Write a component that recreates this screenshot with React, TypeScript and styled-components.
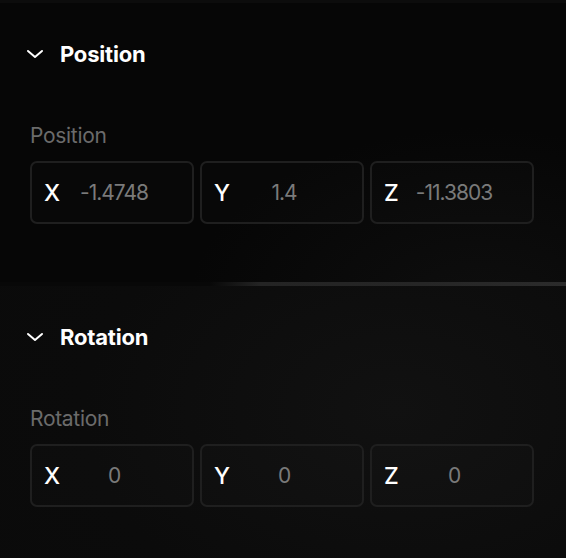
import styled, { createGlobalStyle } from "styled-components";

const GlobalStyle = createGlobalStyle`
  html, body {
    margin: 0;
    padding: 0;
    background: #060606;
  }
  body {
    font-family: Inter, "Noto Sans", sans-serif;
  }
`;

const Panel = styled.div`
  width: 566px;
  height: 558px;
  overflow: hidden;
  display: flex;
  flex-direction: column;
  background: #060606;
  border-top: 3px solid #0c0c0c;
  box-sizing: border-box;
`;

const Section = styled.section<{ $tone: "dark" | "light" }>`
  display: flex;
  flex-direction: column;
  padding: 33px 0 0 30px;
  height: ${(p) => (p.$tone === "dark" ? "279px" : "272px")};
  box-sizing: border-box;
  flex-shrink: 0;
  background: ${(p) =>
    p.$tone === "dark"
      ? "radial-gradient(ellipse 420px 260px at 85% 110%, #0e0e0e 0%, #060606 70%)"
      : "radial-gradient(ellipse 520px 360px at 70% 45%, #111111 0%, #0b0b0b 60%, #0a0a0a 100%)"};
`;

const Divider = styled.div`
  height: 4px;
  flex-shrink: 0;
  background: linear-gradient(
    to right,
    #080808 0%,
    #080808 37%,
    #242424 46%,
    #262626 75%,
    #2b2b2b 100%
  );
`;

const Header = styled.div`
  display: flex;
  align-items: center;
  gap: 16px;
  height: 36px;
  margin-left: -4px;
  color: #ffffff;
`;

const HeaderTitle = styled.h2`
  margin: 0;
  font-size: 22px;
  font-weight: 700;
  letter-spacing: -0.2px;
`;

const Chevron = styled.svg`
  width: 18px;
  height: 10px;
  flex-shrink: 0;
`;

const FieldLabel = styled.div`
  margin-top: 49px;
  height: 30px;
  line-height: 30px;
  font-size: 21px;
  color: #6b6b6b;
  letter-spacing: -0.3px;
`;

const Row = styled.div`
  display: flex;
  gap: 6px;
  margin-top: 10px;
`;

const Field = styled.label`
  display: flex;
  align-items: center;
  width: 164px;
  height: 63px;
  box-sizing: border-box;
  padding-left: 12px;
  border: 2px solid #1f1f1f;
  border-radius: 7px;
  background: rgba(255, 255, 255, 0.012);
`;

const Axis = styled.span`
  width: 20px;
  font-size: 23px;
  font-weight: 500;
  color: #ffffff;
`;

const Value = styled.input`
  width: 100px;
  padding: 0;
  border: 0;
  outline: none;
  background: transparent;
  font-family: inherit;
  font-size: 21px;
  color: #7a7a7a;
  letter-spacing: -1px;
  text-align: center;
`;

interface Vec {
  axis: string;
  value: string;
}

const ChevronIcon = () => (
  <Chevron viewBox="0 0 18 10" fill="none">
    <path d="M2 2l7 6 7-6" stroke="#ffffff" strokeWidth="2" strokeLinecap="round" strokeLinejoin="round" />
  </Chevron>
);

const VectorSection = ({ title, values, tone }: { title: string; values: Vec[]; tone: "dark" | "light" }) => (
  <Section $tone={tone}>
    <Header>
      <ChevronIcon />
      <HeaderTitle>{title}</HeaderTitle>
    </Header>
    <FieldLabel>{title}</FieldLabel>
    <Row>
      {values.map((v) => (
        <Field key={v.axis}>
          <Axis>{v.axis}</Axis>
          <Value defaultValue={v.value} />
        </Field>
      ))}
    </Row>
  </Section>
);

export default function App() {
  return (
    <>
      <GlobalStyle />
      <Panel>
        <VectorSection
          tone="dark"
          title="Position"
          values={[
            { axis: "X", value: "-1.4748" },
            { axis: "Y", value: "1.4" },
            { axis: "Z", value: "-11.3803" },
          ]}
        />
        <Divider />
        <VectorSection
          tone="light"
          title="Rotation"
          values={[
            { axis: "X", value: "0" },
            { axis: "Y", value: "0" },
            { axis: "Z", value: "0" },
          ]}
        />
      </Panel>
    </>
  );
}
